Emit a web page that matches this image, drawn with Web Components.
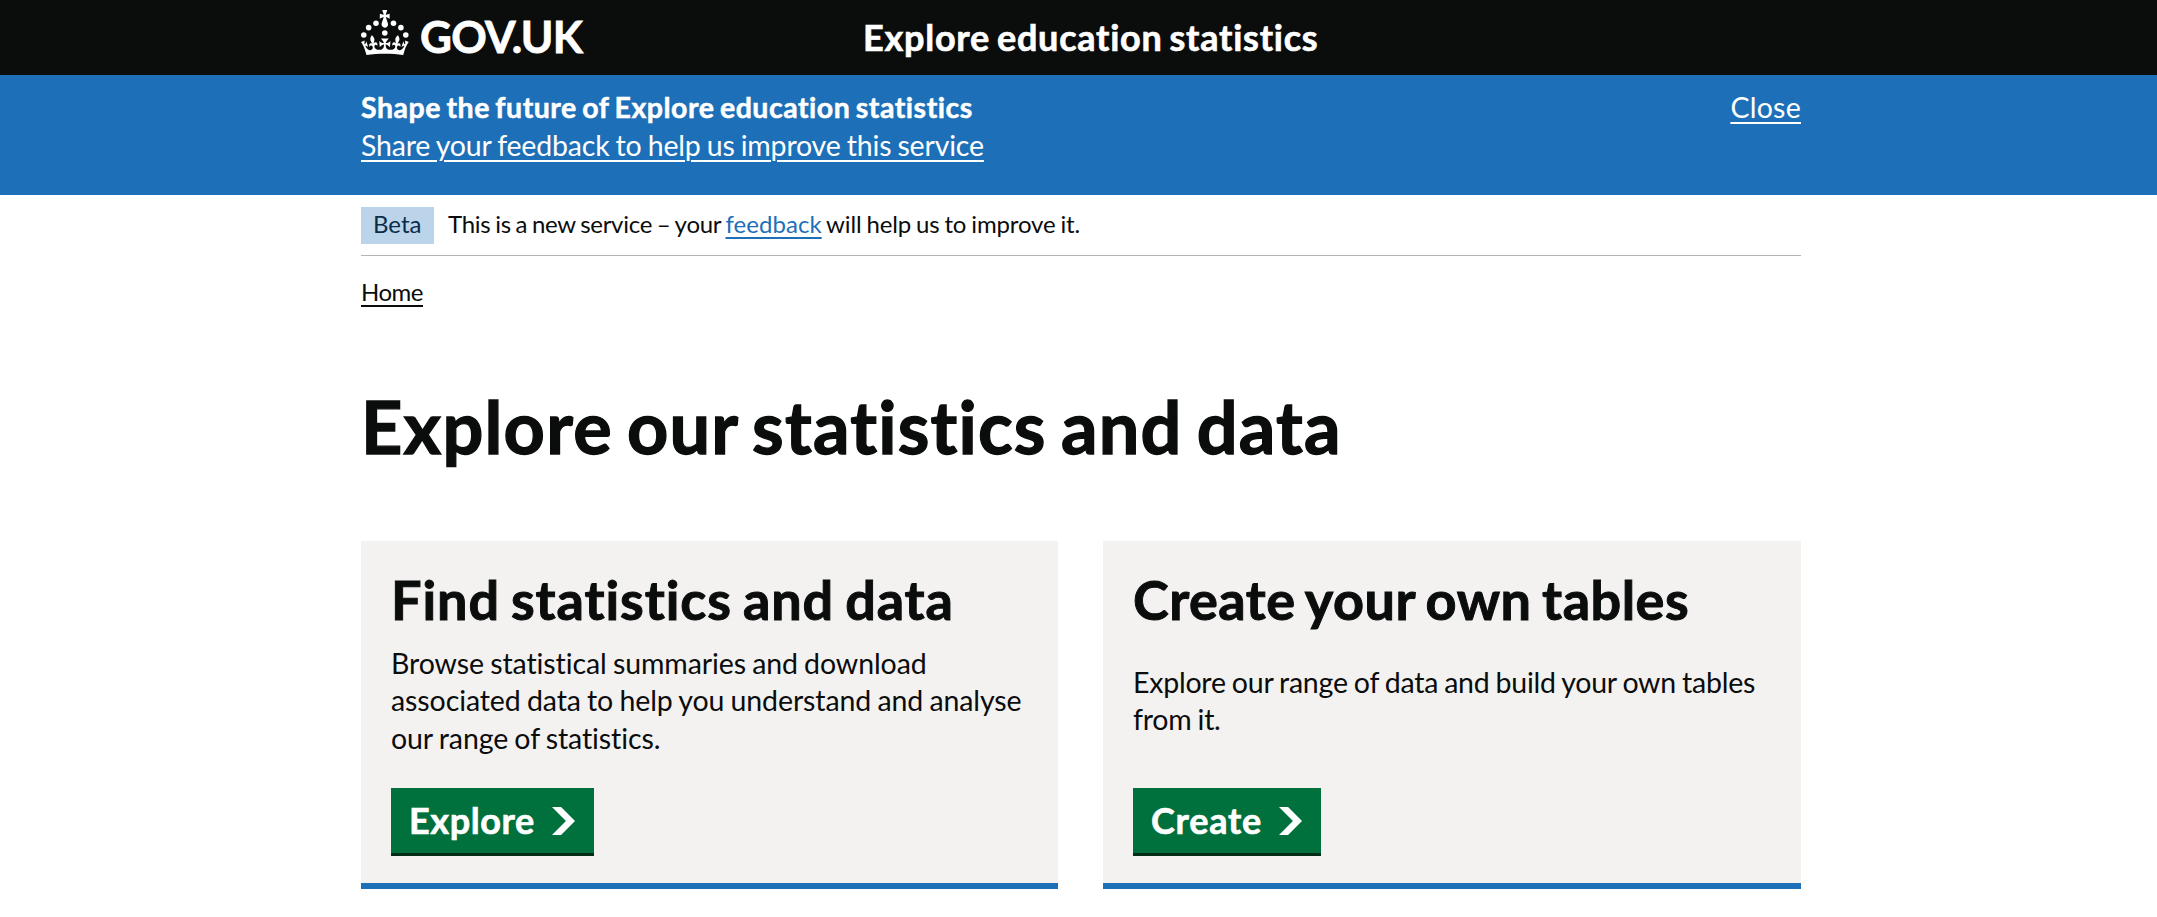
<!DOCTYPE html>
<html lang="en">
<head>
<meta charset="utf-8">
<title>Explore our statistics and data</title>
<style>
body{margin:0;background:#fff;color:#0b0c0c;font-family:Lato,"Liberation Sans",sans-serif;font-size:28.5px;line-height:37.5px;font-variant-ligatures:none;--wrap:1440px;--edge:361px;--heavy:.018em}
.cards{display:grid;grid-template-columns:697px 698px;column-gap:45px;width:var(--wrap);margin-left:var(--edge)}
</style>
</head>
<body>
<site-header>Explore education statistics</site-header>
<feedback-banner></feedback-banner>
<phase-banner></phase-banner>
<bread-crumb>Home</bread-crumb>
<page-title>Explore our statistics and data</page-title>
<div class="cards">
<action-card style="--h:.9px;--p:-.09px">
<span slot="title">Find statistics and data</span>
Browse statistical summaries and download<br>associated data to help you understand and analyse<br>our range of statistics.
<start-button slot="action" style="width:203px;--s:.6px">Explore</start-button>
</action-card>
<action-card style="--h:.5px;--p:-.23px">
<span slot="title">Create your own tables</span>
Explore our range of data and build your own tables<br>from it.
<start-button slot="action" style="width:188px;--s:.75px">Create</start-button>
</action-card>
</div>
<script>
const define = (name, html) => customElements.define(name, class extends HTMLElement {
  constructor() {
    super();
    this.attachShadow({ mode: 'open' }).innerHTML = html;
  }
});

define('crown-logo', `
<style>
:host{display:flex;align-items:center;color:#fff}
svg{display:block;width:48px;height:45px;flex:none}
span{font-size:44px;font-weight:700;line-height:50px;margin:6px 0 0 11px;letter-spacing:-.7px;-webkit-text-stroke:var(--heavy)}
</style>
<svg viewBox="0 0 64 60" fill="currentColor" aria-hidden="true">
<circle cx="20" cy="17.6" r="3.7"/><circle cx="10.2" cy="23.5" r="3.7"/><circle cx="3.7" cy="33.2" r="3.7"/>
<circle cx="31.7" cy="30.6" r="3.7"/><circle cx="43.3" cy="17.6" r="3.7"/><circle cx="53.2" cy="23.5" r="3.7"/><circle cx="59.7" cy="33.2" r="3.7"/>
<path d="M33.1,9.8c.2-.1.3-.3.5-.5l4.6,2.4v-6.8l-4.6,1.5c-.1-.2-.3-.3-.5-.5l1.9-5.9h-6.7l1.9,5.9c-.2.1-.3.3-.5.5l-4.6-1.5v6.8l4.6-2.4c.1.2.3.3.5.5l-2.6,8c-.9,2.8,1.2,5.7,4.1,5.7h0c3,0,5.1-2.9,4.1-5.7l-2.6-8ZM37,37.9s-3.4,3.8-4.1,6.1c2.2,0,4.2-.5,6.4-2.8l-.7,8.5c-2-2.8-4.4-4.1-5.7-3.8.1,3.1.5,6.7,5.8,7.2,3.7.3,6.7-1.5,7-3.8.4-2.6-2-4.3-3.7-1.6-1.4-4.5,2.4-6.1,4.9-3.2-1.9-4.5-1.8-7.7,2.4-10.9,3,4,2.6,7.3-1.2,11.1,2.4-1.3,6.2,0,4,4.6-1.2-2.8-3.7-2.2-4.2.2-.3,1.7.7,3.7,3,4.2,1.9.3,4.7-.9,7-5.9-1.3,0-2.4.7-3.9,1.7l2.4-8c.6,2.3,1.4,3.7,2.2,4.5.6-1.6.5-2.8,0-5.3l5,1.8c-2.6,3.6-5.2,8.7-7.3,17.5-7.4-1.1-15.7-1.7-24.5-1.7h0c-8.8,0-17.1.6-24.5,1.7-2.1-8.9-4.7-14-7.3-17.5l5-1.8c-.5,2.5-.6,3.7,0,5.3.8-.8,1.6-2.3,2.2-4.5l2.4,8c-1.5-1-2.6-1.7-3.9-1.7,2.3,5,5.2,6.2,7,5.9,2.3-.4,3.3-2.4,3-4.2-.5-2.4-3-3.1-4.2-.2-2.2-4.6,1.6-6,4-4.6-3.7-3.7-4.2-7.1-1.2-11.1,4.2,3.2,4.3,6.4,2.4,10.9,2.5-2.8,6.3-1.3,4.9,3.2-1.8-2.7-4.1-1-3.7,1.6.3,2.3,3.3,4.1,7,3.8,5.4-.5,5.7-4.2,5.8-7.2-1.3-.2-3.7,1-5.7,3.8l-.7-8.5c2.2,2.3,4.2,2.7,6.4,2.8-.7-2.3-4.1-6.1-4.1-6.1h10.6,0Z"/>
</svg>
<span>GOV.UK</span>`);

define('site-header', `
<style>
:host{display:block;background:#0b0c0c;height:75px}
div{display:grid;grid-template-columns:502px 1fr;width:var(--wrap);margin-left:var(--edge)}
crown-logo{height:65px}
b{color:#fff;font-size:36px;line-height:40px;padding-top:17px;letter-spacing:.75px;word-spacing:-2.5px;-webkit-text-stroke:var(--heavy)}
</style>
<div><crown-logo></crown-logo><b><slot></slot></b></div>`);

define('feedback-banner', `
<style>
:host{display:block;background:#1d70b8;color:#fff;height:120px}
div{display:flex;justify-content:space-between;width:var(--wrap);margin-left:var(--edge);padding-top:14px}
p{margin:0}
b{display:block;letter-spacing:.52px;word-spacing:-2px;-webkit-text-stroke:var(--heavy)}
a{color:inherit;text-decoration:underline 2px;text-underline-offset:4px}
.share{letter-spacing:-.18px;word-spacing:-1px}
.close{letter-spacing:.26px}
</style>
<div><p><b>Shape the future of Explore education statistics</b><a class="share">Share your feedback to help us improve this service</a></p><a class="close">Close</a></div>`);

define('phase-banner', `
<style>
:host{display:flex;width:var(--wrap);margin-left:var(--edge);height:48px;padding-top:12px;border-bottom:1px solid #b1b4b6;font-size:24px;line-height:34px}
.tag{box-sizing:border-box;width:73px;height:37px;padding-left:12px;background:#bbd4ea;color:#0c2d4a}
p{margin:0 0 0 14px;letter-spacing:-.28px;word-spacing:-1.1px;white-space:nowrap}
a{color:#1d70b8;letter-spacing:.04px;text-decoration:underline 2px;text-underline-offset:4px}
.rest{letter-spacing:-.13px}
</style>
<span class="tag">Beta</span><p>This is a new service – your <a>feedback</a><span class="rest"> will help us to improve it.</span></p>`);

define('bread-crumb', `
<style>
:host{display:block;margin:21px 0 0 var(--edge);font-size:24px;line-height:30px}
a{text-decoration:underline 2px;text-underline-offset:4px;letter-spacing:-.49px}
</style>
<a><slot></slot></a>`);

define('page-title', `
<style>
:host{display:block;margin:81px 0 77px var(--edge)}
h1{margin:0;font-size:72px;line-height:76px;letter-spacing:1.2px;word-spacing:-4.5px;-webkit-text-stroke:var(--heavy)}
</style>
<h1><slot></slot></h1>`);

define('start-button', `
<style>
:host{display:flex;box-sizing:border-box;height:65px;padding:0 19px 0 18px;align-items:center;justify-content:space-between;background:#00703c;color:#fff;box-shadow:0 3px #002d18;font-size:36px;font-weight:700;line-height:40px;letter-spacing:var(--s)}
span{padding-bottom:2px;-webkit-text-stroke:var(--heavy)}
svg{display:block;width:23px;height:28px}
</style>
<span><slot></slot></span>
<svg viewBox="0 0 33 40" preserveAspectRatio="none" aria-hidden="true"><path fill="currentColor" d="M0 0h13l20 20-20 20H0l20-20z"/></svg>`);

define('action-card', `
<style>
:host{display:flex;flex-direction:column;align-items:flex-start;box-sizing:border-box;height:348px;padding:31px 30px 0;background:#f3f2f1;border-bottom:6px solid #1d70b8}
h2{margin:0;font-size:54px;line-height:56px;letter-spacing:var(--h);word-spacing:-3px;-webkit-text-stroke:var(--heavy)}
.text{display:flex;align-items:center;height:114px;margin:16px 0 30px;letter-spacing:var(--p);word-spacing:-1px;white-space:nowrap}
p{margin:0}
</style>
<h2><slot name="title"></slot></h2>
<div class="text"><p><slot></slot></p></div>
<slot name="action"></slot>`);
</script>
</body>
</html>
